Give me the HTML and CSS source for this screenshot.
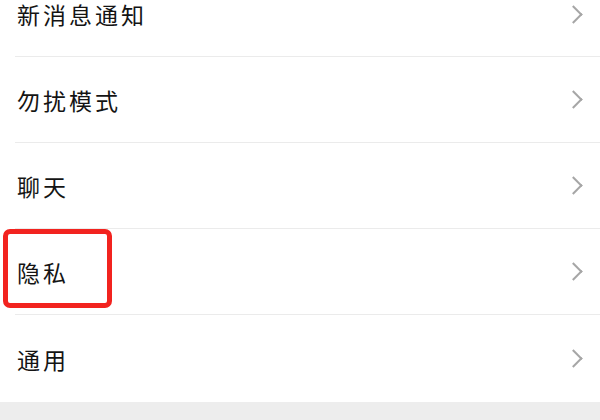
FILE: index.html
```html
<!doctype html>
<html lang="zh-CN">
<head>
	<meta charset="UTF-8">
	<title>设置</title>
	<link rel="stylesheet" href="styles.css">
</head>
<body>
	<div class="settings">
		<ul class="menu">
			<li class="menu_item menu_first"><span>新消息通知</span><i class="arrow"></i></li>
			<li class="menu_item"><span>勿扰模式</span><i class="arrow"></i></li>
			<li class="menu_item"><span>聊天</span><i class="arrow"></i></li>
			<li class="menu_item menu_mark"><span>隐私</span><i class="arrow"></i></li>
			<li class="menu_item"><span>通用</span><i class="arrow"></i></li>
		</ul>
		<div class="gap"></div>
	</div>
</body>
</html>
```
FILE: styles.css
```css
body, div, ul, li{
	margin: 0;
	padding: 0;
}
body{
	background-color: #fff;
	font-family: "Noto Sans CJK SC", sans-serif;
	overflow: hidden;
}
ul{
	list-style: none;
}
.menu_item{
	position: relative;
	display: flex;
	align-items: center;
	justify-content: space-between;
	height: 85px;
	margin-left: 15px;
	padding: 0 20px 0 2px;
	border-bottom: 1px solid #ebebeb;
	font-size: 23px;
	letter-spacing: 3px;
	color: #141414;
}
/* 首行只露出下半截 */
.menu_first{
	height: 56px;
	align-items: flex-start;
	padding-top: 1px;
	box-sizing: border-box;
	height: 57px;
}
.menu_first > span{
	line-height: 26px;
}
.menu_first > .arrow{
	margin-top: 7px;
}
.menu_item:last-child{
	border-bottom: none;
	height: 87px;
}
.arrow{
	width: 11px;
	height: 11px;
	border-top: 2px solid #a6a6a6;
	border-right: 2px solid #a6a6a6;
	transform: rotate(45deg);
}
.menu_mark::after{
	content: "";
	position: absolute;
	left: -12px;
	top: 0;
	width: 99px;
	height: 69px;
	border: 5px solid #f2231f;
	border-radius: 7px;
}
.gap{
	height: 20px;
	background-color: #ededed;
}
```
